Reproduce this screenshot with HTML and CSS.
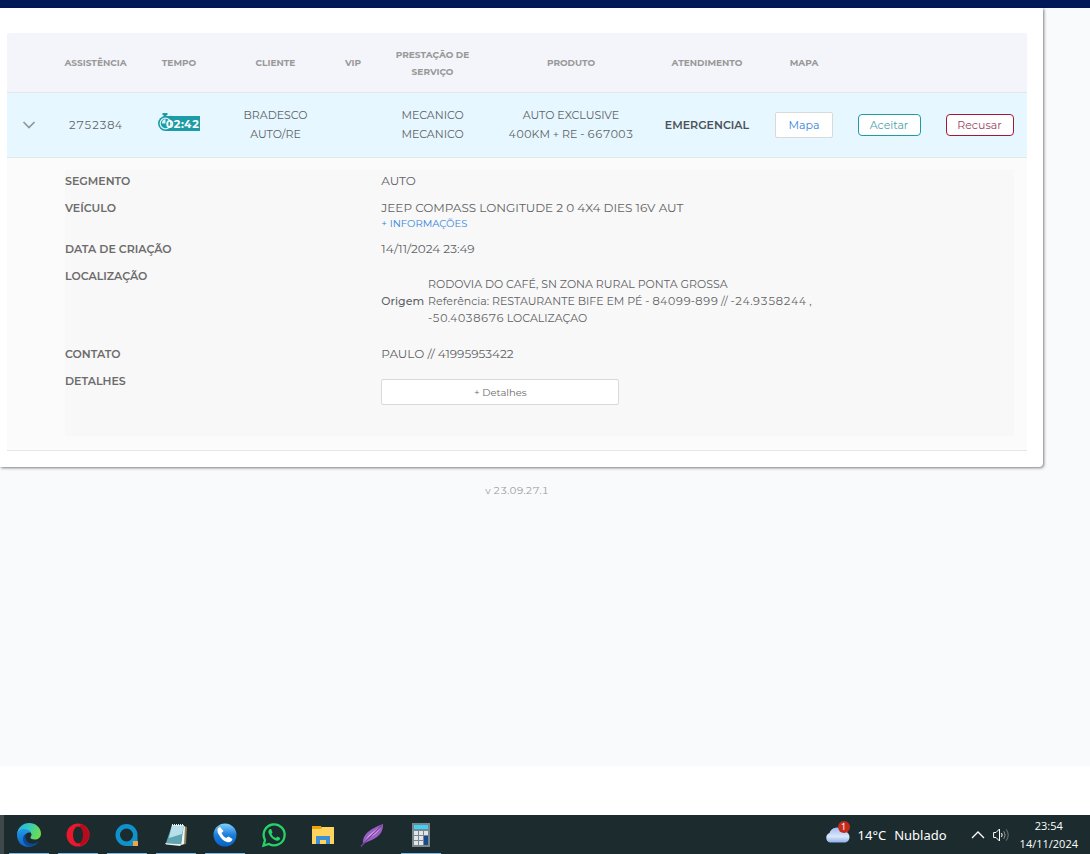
FILE: index.html
```html
<!DOCTYPE html>
<html lang="pt-BR">
<head>
<meta charset="UTF-8">
<meta name="viewport" content="width=device-width, initial-scale=1.0">
<title>Assistências</title>
<link rel="stylesheet" href="styles.css">
</head>
<body>

<div class="app">
    <header class="topbar"></header>
    <main>
        <section class="card">
            <table class="assist">
                <colgroup>
                    <col class="c-seta">
                    <col class="c-assist">
                    <col class="c-tempo">
                    <col class="c-cliente">
                    <col class="c-vip">
                    <col class="c-servico">
                    <col class="c-produto">
                    <col class="c-atend">
                    <col class="c-mapa">
                    <col class="c-aceitar">
                    <col class="c-recusar">
                </colgroup>
                <thead>
                    <tr>
                        <th></th>
                        <th>ASSISTÊNCIA</th>
                        <th>TEMPO</th>
                        <th>CLIENTE</th>
                        <th>VIP</th>
                        <th>PRESTAÇÃO DE SERVIÇO</th>
                        <th>PRODUTO</th>
                        <th>ATENDIMENTO</th>
                        <th>MAPA</th>
                        <th></th>
                        <th></th>
                    </tr>
                </thead>
                <tbody>
                    <tr class="linha">
                        <td>
                            <button class="seta" aria-label="Fechar detalhes">
                                <svg width="14" height="8" viewBox="0 0 14 8"><path d="M1.5 1 L7 6.5 L12.5 1" fill="none" stroke="#8f979b" stroke-width="1.7"/></svg>
                            </button>
                        </td>
                        <td>2752384</td>
                        <td>
                            <span class="tempo">
                                <svg class="relogio" width="16" height="18" viewBox="0 0 16 18">
                                    <path d="M4.500 0h5v2H8.500v2h-3V2h-1z" fill="#1c9ca6"/>
                                    <path d="M11.500 4l1.500-1.500 1.500 1.500-1.500 1.500z" fill="#1c9ca6"/>
                                    <circle cx="7.500" cy="10.500" r="7.500" fill="#1c9ca6"/>
                                    <circle cx="7.500" cy="10.500" r="5.300" fill="none" stroke="#d9f3f8" stroke-width="1.200"/>
                                    <path d="M7.500 6v4.500H4A4 4 0 0 1 7.500 6z" fill="#d9f3f8"/>
                                </svg>
                                <b>02:42</b>
                            </span>
                        </td>
                        <td>BRADESCO AUTO/RE</td>
                        <td></td>
                        <td>MECANICO MECANICO</td>
                        <td>AUTO EXCLUSIVE<br>400KM + RE - 667003</td>
                        <td class="emergencial">EMERGENCIAL</td>
                        <td><button class="btn mapa">Mapa</button></td>
                        <td><button class="btn aceitar">Aceitar</button></td>
                        <td><button class="btn recusar">Recusar</button></td>
                    </tr>
                    <tr class="detalhe">
                        <td colspan="11">
                            <dl>
                                <dt>SEGMENTO</dt>
                                <dd>AUTO</dd>
                                <dt>VEÍCULO</dt>
                                <dd>JEEP COMPASS LONGITUDE 2 0 4X4 DIES 16V AUT
                                    <a href="#">+ INFORMAÇÕES</a></dd>
                                <dt>DATA DE CRIAÇÃO</dt>
                                <dd>14/11/2024 23:49</dd>
                                <dt>LOCALIZAÇÃO</dt>
                                <dd class="local">
                                    <span class="origem">Origem</span>
                                    <span>RODOVIA DO CAFÉ, SN ZONA RURAL PONTA GROSSA<br>
                                    Referência: RESTAURANTE BIFE EM PÉ - 84099-899 // -24.9358244 ,<br>
                                    -50.4038676 LOCALIZAÇAO</span>
                                </dd>
                                <dt>CONTATO</dt>
                                <dd>PAULO // 41995953422</dd>
                                <dt>DETALHES</dt>
                                <dd class="mais"><button>+ Detalhes</button></dd>
                            </dl>
                        </td>
                    </tr>
                </tbody>
            </table>
        </section>
        <p class="versao">v 23.09.27.1</p>
    </main>
</div>

<footer class="taskbar">
    <nav class="programas">
        <button class="aberto" aria-label="Edge">
            <svg width="26" height="26" viewBox="0 0 26 26">
                <defs>
                    <linearGradient id="edge1" x1="0" y1="0" x2="1" y2="0.300"><stop offset="0" stop-color="#2aa9e0"/><stop offset="0.500" stop-color="#34c8c4"/><stop offset="1" stop-color="#6bdc52"/></linearGradient>
                    <linearGradient id="edge2" x1="0" y1="0" x2="0" y2="1"><stop offset="0" stop-color="#1f9be6"/><stop offset="1" stop-color="#1260c0"/></linearGradient>
                </defs>
                <path d="M1 12C2 5 7 1 13 1c7 0 12 5 12 10.500 0 4-3 6-6 6-3.500 0-5-1.200-4.500-2.500 2-2 1-5-2.500-6C8 8 3 9 1 12z" fill="url(#edge1)"/>
                <path d="M1 13c0-4 4-6.500 8-6 3 .3 5.500 2 6 4-2-1.500-6 .5-6 4 0 5 5 8 9 8-2 1.500-4 2-6 2C6 25 1 20 1 13z" fill="url(#edge2)"/>
                <path d="M11.500 11c-3 2-3 6-.5 8.500 3 3 8 3 12-.5-1.500 3-4 5-7 5.500-5 .5-9-3-9-7.500 0-3 2-5.500 4.500-6z" fill="#0c4a98"/>
            </svg>
        </button>
        <button class="aberto" aria-label="Opera">
            <svg width="24" height="24" viewBox="0 0 24 24">
                <ellipse cx="12" cy="12" rx="11.500" ry="11.500" fill="#e8192c"/>
                <path d="M15 1a11.500 11.500 0 0 1 0 22c-3-1-2-21 0-22z" fill="#b40c1c"/>
                <ellipse cx="12" cy="12" rx="5" ry="8.500" fill="#1b2b2e"/>
            </svg>
        </button>
        <button class="aberto" aria-label="Autem">
            <svg width="24" height="24" viewBox="0 0 24 24">
                <path d="M11.500 1A11 11 0 0 1 22.500 12V18H18V23H11.500A11 11 0 0 1 11.500 1zM11.500 5.500a6.500 6.500 0 1 0 0 13 6.500 6.500 0 1 0 0-13z" fill="#0f92cc" fill-rule="evenodd"/>
                <rect x="18" y="18" width="5" height="5" fill="#f3a24c"/>
            </svg>
        </button>
        <button class="aberto" aria-label="Bloco de notas">
            <svg width="24" height="24" viewBox="0 0 24 24">
                <path d="M20 3l3 1-1 17-5 1z" fill="#8b8055"/>
                <path d="M19 2l2 2-1 17-3 1z" fill="#eef7f8"/>
                <path d="M8 2h12l-3 19-15-1z" fill="#5fa5b4"/>
                <path d="M8 2h12l-2 9-13 4z" fill="#b9e0e8"/>
                <path d="M1 20l16 1-.5 2L2 21.500z" fill="#e8f2f3"/>
                <path d="M8 2h12" stroke="#ecf3f3" stroke-width="2" stroke-dasharray="1 1"/>
            </svg>
        </button>
        <button class="aberto" aria-label="Telefone">
            <svg width="24" height="24" viewBox="0 0 24 24">
                <defs><linearGradient id="fone" x1="0" y1="0" x2="0" y2="1"><stop offset="0" stop-color="#7fd0fb"/><stop offset="0.500" stop-color="#1b7edb"/><stop offset="1" stop-color="#0a60c8"/></linearGradient></defs>
                <circle cx="12" cy="12" r="11.500" fill="url(#fone)"/>
                <path d="M7 4c-3 1-3 4-1.500 7 2 4 5 7 8.500 8 3 .8 5-.5 5.500-3l-4-2.500-2.500 1.500c-2-1-3.500-3-4.500-5l2-2z" fill="#fff"/>
            </svg>
        </button>
        <button aria-label="WhatsApp">
            <svg width="26" height="26" viewBox="0 0 26 26">
                <path d="M2.500 23.500l1.500-5.500a10.500 10.500 0 1 1 4 4z" fill="#1b2b2e" stroke="#25d366" stroke-width="2.300"/>
                <path d="M9 7c-2 1-2 3-1 5 1.500 3 4 5.500 7 6.500 2.500.7 4-.5 4.300-2.500l-3-1.500-1.500 1.500c-2-.7-3.500-2-4.300-4l1-1.500L10.200 7z" fill="#25d366"/>
            </svg>
        </button>
        <button aria-label="Explorador de arquivos">
            <svg width="24" height="24" viewBox="0 0 24 24">
                <path d="M1 3h9l1 2h12v16H1z" fill="#f0a30a"/>
                <path d="M1 6h9l1-2h12v17H1z" fill="#ffd45e"/>
                <path d="M5 21v-8h14v8h-4v-4H9v4z" fill="#3f8fd4"/>
            </svg>
        </button>
        <button aria-label="Pena">
            <svg width="24" height="24" viewBox="0 0 24 24">
                <path d="M3 21C2 13 8 8 14 5c3-1.500 6-3 9-4 0 6-2 10-6 13-4 3-9 4-12 6z" fill="#9a5fc0"/>
                <path d="M4 20C7 12 15 8 22 2 19 8 15 12 10 14z" fill="#dcbcec"/>
                <path d="M1 23.500L4 20C10 13 16 9 22 2" fill="none" stroke="#7a3da6" stroke-width="1.200"/>
            </svg>
        </button>
        <button class="aberto" aria-label="Calculadora">
            <svg width="18" height="24" viewBox="0 0 18 24">
                <rect width="18" height="24" fill="#7a858c"/>
                <rect x="2" y="2" width="14" height="4" fill="#3fd0f5"/>
                <path d="M2 8h4v4H2zM7 8h4v4H7zM12 8h4v4h-4zM2 13h4v4H2zM7 13h4v4H7zM2 18h4v4H2zM7 18h4v4H7z" fill="#dfe5e8"/>
                <rect x="12" y="13" width="4" height="9" fill="#174a8c"/>
            </svg>
        </button>
    </nav>
    <div class="bandeja">
        <button class="clima">
            <span class="nuvem">
                <svg width="25" height="17" viewBox="0 0 25 17">
                    <defs><linearGradient id="ceu" x1="0" y1="0" x2="0" y2="1"><stop offset="0" stop-color="#9fbdf0"/><stop offset="0.600" stop-color="#dbe7fb"/><stop offset="1" stop-color="#8fb0ea"/></linearGradient></defs>
                    <path d="M5 16.500a5 5 0 0 1-.5-9.500A7.500 7.500 0 0 1 18 5c4 0 6.500 3 6.500 6s-2 5.500-5 5.500z" fill="url(#ceu)"/>
                </svg>
                <span class="aviso">1</span>
            </span>
            <span>14°C</span>
            <span>Nublado</span>
        </button>
        <button class="mostrar" aria-label="Mostrar ícones ocultos">
            <svg width="14" height="8" viewBox="0 0 14 8"><path d="M1 7l6-6 6 6" fill="none" stroke="#fff" stroke-width="1.300"/></svg>
        </button>
        <button class="som" aria-label="Volume">
            <svg width="17" height="14" viewBox="0 0 17 14" fill="none" stroke="#fff">
                <path d="M.6 4.500h2.400l3.500-3.500v12L3 9.500H.6z"/>
                <path d="M8.500 5q1.300 2 0 4"/>
                <path d="M10.800 3.200q2.700 3.800 0 7.600" stroke="#8d9798"/>
                <path d="M13.200 1.300q4 5.700 0 11.400" stroke="#6e7a7c"/>
            </svg>
        </button>
        <div class="hora">23:54<br>14/11/2024</div>
    </div>
</footer>

</body>
</html>
```
FILE: styles.css
```css
* {
    box-sizing: border-box;
}

body {
    margin: 0;
    min-height: 100vh;
    display: flex;
    flex-direction: column;
    background-color: #fff;
    color: #5f6265;
    font-family: Montserrat, Inter, sans-serif;
    font-size: 12px;
}

button {
    font-family: inherit;
    padding: 0;
    cursor: pointer;
}

.app {
    flex: 1;
    margin-bottom: 49px;
    background-color: #f9fafc;
}

.topbar {
    height: 8px;
    background-color: #001a57;
}

main {
    margin-right: 47px;
}

.card {
    padding: 25px 16px 16px 7px;
    background-color: #fff;
    border-bottom-right-radius: 4px;
    box-shadow: 1px 1px 3px rgba(0, 0, 0, 0.5);
}

/* Tabela */
.assist {
    width: 100%;
    table-layout: fixed;
    border-collapse: separate;
    border-spacing: 0;
    text-align: center;
}

.c-seta { width: 44px; }
.c-assist { width: 89px; }
.c-tempo { width: 78px; }
.c-cliente { width: 115px; }
.c-vip { width: 40px; }
.c-servico { width: 119px; }
.c-produto { width: 158px; }
.c-atend { width: 114px; }
.c-mapa { width: 80px; }
.c-aceitar { width: 90px; }
.c-recusar { width: 93px; }

th {
    height: 60px;
    padding: 0;
    background-color: #f4f5fa;
    border-bottom: 1px solid #e4e6e9;
    color: #999;
    font-size: 9px;
    font-weight: 700;
    line-height: 17px;
    white-space: nowrap;
}

th:nth-child(6) {
    padding: 0 16px;
    white-space: normal;
}

th:first-child {
    border-top-left-radius: 2px;
}

th:last-child {
    border-top-right-radius: 2px;
}

.linha td {
    height: 65px;
    padding: 0;
    background-color: #e6f7ff;
    border-bottom: 1px solid #e4e6e9;
    font-size: 11px;
    font-variant-numeric: tabular-nums;
    line-height: 19px;
}

.linha td:nth-child(4),
.linha td:nth-child(6) {
    padding: 0 22px;
}

.linha td:last-child {
    padding-right: 2px;
}

.linha .emergencial {
    color: #4c5256;
    font-weight: 600;
}

.seta {
    border: 0;
    background: none;
}

.tempo {
    position: relative;
    display: inline-block;
    width: 42px;
    height: 15px;
    margin-bottom: 4px;
    padding-left: 7px;
    background: linear-gradient(to right, transparent 7px, #1c9ca6 7px);
    color: #fff;
    line-height: 17px;
    vertical-align: middle;
}

.tempo b {
    position: relative;
}

.relogio {
    position: absolute;
    left: 0;
    bottom: 0;
}

.btn {
    height: 22px;
    background-color: #fff;
    border: 1px solid;
    border-radius: 4px;
    font-size: 11px;
}

.mapa {
    width: 58px;
    height: 26px;
    border-color: #d9d9d9;
    border-radius: 2px;
    color: #3585dc;
}

.aceitar {
    width: 63px;
    border-color: #1c9ca6;
    color: #4aa5ab;
}

.recusar {
    width: 68px;
    border-color: #a31832;
    color: #99445e;
}

/* Detalhes da assistencia */
.detalhe td {
    padding: 12px 13px 14px 58px;
    background-color: #fbfbfb;
    border-bottom: 1px solid #e6e6e6;
}

dl {
    display: grid;
    grid-template-columns: 1fr 2fr;
    margin: 0;
    padding-bottom: 31px;
    background-color: #f8f8f8;
    line-height: 22px;
    text-align: left;
}

dt {
    color: #6b6b6b;
    font-size: 11px;
    font-weight: 600;
}

dd {
    margin: 0;
    padding-bottom: 5px;
}

dd a {
    display: block;
    padding-bottom: 4px;
    color: #3585dc;
    font-size: 10px;
    line-height: 10px;
    text-decoration: none;
}

.local {
    display: flex;
    align-items: center;
    gap: 4px;
    padding: 11px 0 16px;
    font-size: 11px;
    font-variant-numeric: tabular-nums;
    line-height: 17px;
}

.origem {
    font-weight: 500;
}

.mais {
    padding: 9px 0 0;
}

.mais button {
    display: block;
    width: 238px;
    height: 26px;
    background-color: #fff;
    border: 1px solid #d9d9d9;
    border-radius: 2px;
    color: #6b6b6b;
    font-size: 10px;
}

.versao {
    margin: 0;
    padding: 16px 9px 0 0;
    color: #999;
    font-size: 10px;
    font-variant-numeric: tabular-nums;
    line-height: 16px;
    text-align: center;
}

/* Barra de tarefas */
.taskbar {
    display: flex;
    justify-content: space-between;
    height: 39px;
    padding-right: 12px;
    border-left: 4px solid #3d494b;
    background-color: #1b2b2e;
    color: #fff;
    font-family: "Segoe UI", "Open Sans", sans-serif;
}

.taskbar button {
    border: 0;
    background: none;
    color: inherit;
}

.programas {
    display: flex;
    gap: 9px;
    padding-left: 5px;
}

.taskbar .programas button {
    display: flex;
    align-items: center;
    justify-content: center;
    width: 40px;
    padding-top: 2px;
    border-bottom: 1px solid transparent;
}

.taskbar .programas .aberto {
    border-bottom-color: #76b9ed;
}

.bandeja {
    display: flex;
    align-items: center;
}

.clima {
    display: flex;
    align-items: center;
    gap: 8px;
    font-family: "Segoe UI", "Noto Sans", sans-serif;
    font-size: 13px;
}

.nuvem {
    position: relative;
    display: flex;
}

.aviso {
    position: absolute;
    top: -5px;
    right: 0;
    width: 12px;
    height: 12px;
    border-radius: 50%;
    background-color: #c42b1c;
    font-size: 9px;
    line-height: 12px;
}

.mostrar {
    margin-left: 24px;
}

.som {
    margin-left: 8px;
}

.mostrar svg,
.som svg {
    display: block;
}

.hora {
    margin-left: 10px;
    font-size: 11px;
    line-height: 18px;
    text-align: center;
}
```
